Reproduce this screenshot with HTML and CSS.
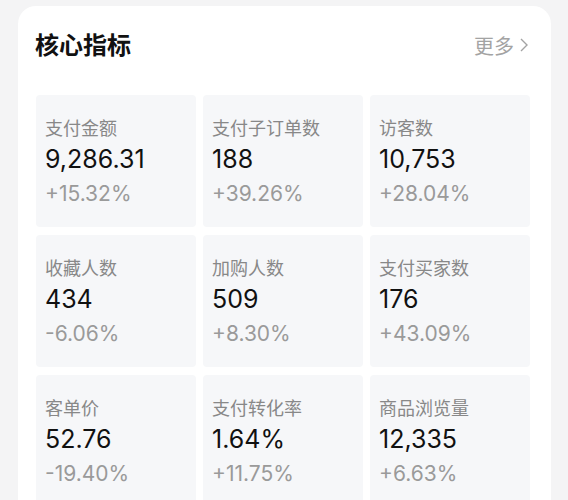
FILE: index.html
```html
<!DOCTYPE html>
<html lang="zh">
<head>
<meta charset="utf-8">
<link rel="stylesheet" href="styles.css">
</head>
<body>
<div class="card">
  <div class="header">
    <div class="title">核心指标</div>
    <div class="more">更多<svg class="chev" width="10" height="16" viewBox="0 0 10 16"><path d="M2 2 L8 8 L2 14" fill="none" stroke="#a3a3a3" stroke-width="1.4"/></svg></div>
  </div>
  <div class="grid">
    <div class="tile"><div class="label">支付金额</div><div class="value">9,286.31</div><div class="pct">+15.32%</div></div>
    <div class="tile"><div class="label">支付子订单数</div><div class="value">188</div><div class="pct">+39.26%</div></div>
    <div class="tile"><div class="label">访客数</div><div class="value">10,753</div><div class="pct">+28.04%</div></div>
    <div class="tile"><div class="label">收藏人数</div><div class="value">434</div><div class="pct">-6.06%</div></div>
    <div class="tile"><div class="label">加购人数</div><div class="value">509</div><div class="pct">+8.30%</div></div>
    <div class="tile"><div class="label">支付买家数</div><div class="value">176</div><div class="pct">+43.09%</div></div>
    <div class="tile"><div class="label">客单价</div><div class="value">52.76</div><div class="pct">-19.40%</div></div>
    <div class="tile"><div class="label">支付转化率</div><div class="value">1.64%</div><div class="pct">+11.75%</div></div>
    <div class="tile"><div class="label">商品浏览量</div><div class="value">12,335</div><div class="pct">+6.63%</div></div>
  </div>
</div>
</body>
</html>
```
FILE: styles.css
```css
html, body {
  margin: 0;
  padding: 0;
  background: #f4f4f5;
  font-family: "Inter", "Noto Sans CJK SC", sans-serif;
}
body {
  padding: 6px 17px 0 18px;
  height: 500px;
  box-sizing: border-box;
  overflow: hidden;
}
.card {
  background: #ffffff;
  border-radius: 18px 18px 0 0;
  padding: 0 21px 0 18px;
  height: 494px;
  overflow: hidden;
}
.header {
  display: flex;
  justify-content: space-between;
  align-items: center;
  height: 89px;
}
.title {
  font-family: "Noto Sans CJK SC", sans-serif;
  font-size: 24px;
  font-weight: 700;
  color: #111;
  margin-top: -14px;
  margin-left: -1px;
}
.more {
  display: flex;
  align-items: center;
  gap: 5px;
  font-family: "Noto Sans CJK SC", sans-serif;
  font-size: 20px;
  color: #a3a3a3;
  margin-top: -11px;
  margin-right: 1px;
}
.grid {
  display: grid;
  grid-template-columns: repeat(3, 160px);
  column-gap: 7px;
  row-gap: 8px;
}
.tile {
  background: #f6f7f9;
  border-radius: 4px;
  padding: 18px 9px 16px 9px;
  height: 132px;
  box-sizing: border-box;
}
.label {
  font-family: "Noto Sans CJK SC", sans-serif;
  font-size: 18px;
  line-height: 28px;
  color: #888;
}
.value {
  font-size: 25px;
  line-height: 36px;
  color: #111;
}
.pct {
  font-size: 21px;
  line-height: 34px;
  color: #9a9a9a;
}
```
